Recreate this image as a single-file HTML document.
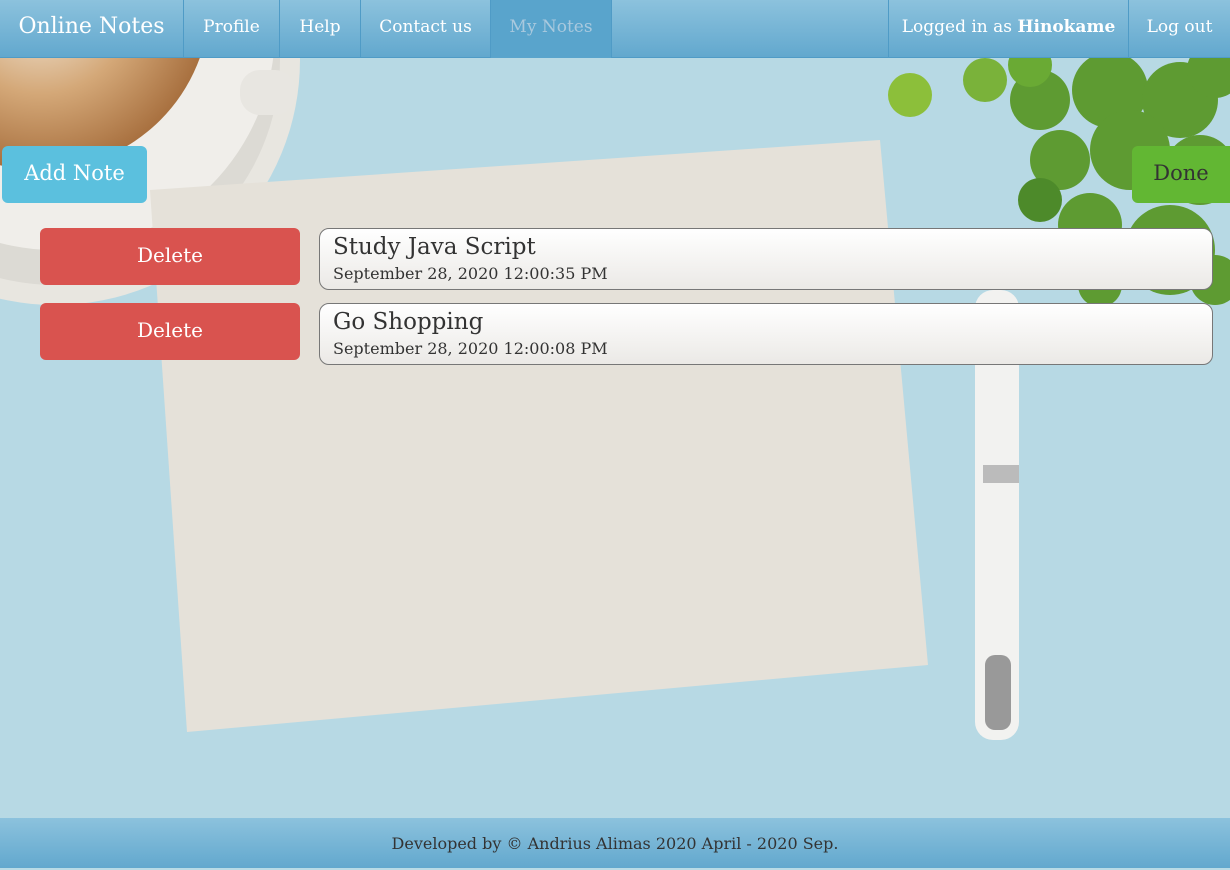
<!DOCTYPE html>
<html><head><meta charset="utf-8"><style>
*{box-sizing:border-box;margin:0;padding:0}
body{width:1230px;height:868px;overflow:hidden;font-family:"DejaVu Serif","Liberation Serif",serif;position:relative;background:#b8dbe6}
.bg{position:absolute;left:0;top:0}
nav{position:absolute;left:0;top:0;width:1230px;height:58px;background:linear-gradient(#8cc2dd,#62a8ce);border-bottom:1px solid #4f9bc6;color:#fff;font-size:17px}
nav div{position:absolute;top:0;height:58px;line-height:54px;border-right:1px solid #4f9bc6;text-align:center}
footer{position:absolute;left:0;top:818px;width:1230px;height:50px;background:linear-gradient(#8cc2dd,#62a8ce);text-align:center;line-height:52px;font-size:16px;color:#333}
.btn{position:absolute;border-radius:6px;color:#fff;text-align:center;font-size:21px}
.del{background:#d9534f;left:40px;width:260px;height:57px;line-height:55px;font-size:20px}
.note{position:absolute;left:319px;width:894px;height:62px;border:1px solid #777;border-radius:10px;background:linear-gradient(#fff,#ebe9e6);padding-left:13px;color:#333}
.note .t{font-size:23px;margin-top:5px}
.note .d{font-size:16px;margin-top:4px}
</style></head><body>
<svg class="bg" width="1230" height="868">
<defs><radialGradient id="c" cx="0.5" cy="0.5" r="0.5"><stop offset="0" stop-color="#f5efe4"/><stop offset="0.55" stop-color="#d4a878"/><stop offset="1" stop-color="#a8703f"/></radialGradient></defs>
<rect width="1230" height="868" fill="#b7d9e4"/>
<circle cx="55" cy="60" r="245" fill="#e8e6e0"/>
<circle cx="55" cy="60" r="225" fill="#dcdad4"/>
<circle cx="55" cy="30" r="220" fill="#f0eeea"/>
<polygon points="150,190 880,140 928,665 187,732" fill="#e5e1d9"/>
<circle cx="40" cy="0" r="170" fill="url(#c)"/>
<rect x="240" y="70" width="55" height="45" rx="20" fill="#e8e6e1"/>
<g fill="#5e9b32">
<circle cx="910" cy="95" r="22" fill="#8cbf3a"/><circle cx="985" cy="80" r="22" fill="#7ab23a"/>
<circle cx="1040" cy="100" r="30"/><circle cx="1110" cy="90" r="38"/><circle cx="1180" cy="100" r="38"/>
<circle cx="1060" cy="160" r="30"/><circle cx="1130" cy="150" r="40"/><circle cx="1200" cy="170" r="35"/>
<circle cx="1090" cy="225" r="32"/><circle cx="1170" cy="250" r="45"/><circle cx="1215" cy="70" r="28"/>
<circle cx="1030" cy="65" r="22" fill="#6aaa34"/><circle cx="1100" cy="285" r="22"/><circle cx="1215" cy="280" r="25"/>
<circle cx="1040" cy="200" r="22" fill="#4d8a2a"/>
</g>
<rect x="975" y="290" width="44" height="450" rx="18" fill="#f2f2f0"/>
<rect x="983" y="465" width="36" height="18" fill="#bbb"/>
<rect x="985" y="655" width="26" height="75" rx="10" fill="#999"/>
</svg>
<nav>
<div style="left:0;width:184px;font-size:22px">Online Notes</div>
<div style="left:184px;width:96px">Profile</div>
<div style="left:280px;width:81px">Help</div>
<div style="left:361px;width:130px">Contact us</div>
<div style="left:491px;width:121px;background:#59a4cc;color:#a9c9de">My Notes</div>
<div style="left:888px;width:241px;border-left:1px solid #4f9bc6">Logged in as <b>Hinokame</b></div>
<div style="left:1129px;width:101px;border-right:0">Log out</div>
</nav>
<div class="btn" style="left:2px;top:146px;width:145px;height:57px;line-height:55px;background:#5bc0de">Add Note</div>
<div class="btn" style="left:1132px;top:146px;width:98px;height:57px;line-height:55px;background:#62b733;color:#333;border-radius:6px 0 0 6px">Done</div>
<div class="btn del" style="top:228px">Delete</div>
<div class="note" style="top:228px"><div class="t">Study Java Script</div><div class="d">September 28, 2020 12:00:35 PM</div></div>
<div class="btn del" style="top:303px">Delete</div>
<div class="note" style="top:303px"><div class="t">Go Shopping</div><div class="d">September 28, 2020 12:00:08 PM</div></div>
<footer>Developed by © Andrius Alimas 2020 April - 2020 Sep.</footer>
</body></html>
